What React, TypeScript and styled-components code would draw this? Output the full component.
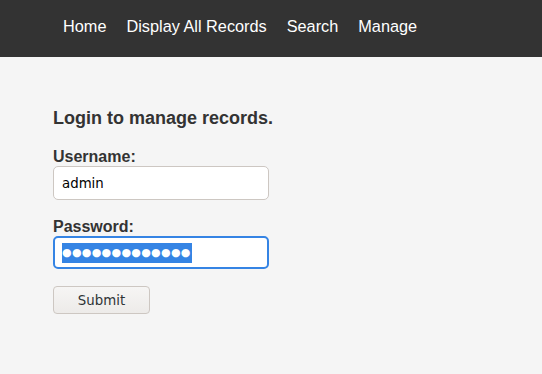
import React from "react";
import styled, { createGlobalStyle } from "styled-components";

const GlobalStyle = createGlobalStyle`
  html, body {
    margin: 0;
    padding: 0;
    background: #f5f5f5;
    font-family: "Liberation Sans", Arial, sans-serif;
  }
`;

const Header = styled.header`
  height: 57px;
  background: #333333;
  display: flex;
  align-items: center;
  padding-left: 53px;
`;

const Nav = styled.nav`
  display: flex;
  align-items: center;
  gap: 20px;
  padding-left: 10px;
  margin-top: -5px;
`;

const NavLink = styled.a`
  color: #ffffff;
  font-size: 16.3px;
  text-decoration: none;
  cursor: pointer;
`;

const Main = styled.main`
  padding: 51px 53px 40px;
`;

const Title = styled.h2`
  margin: 0 0 20px;
  font-size: 18px;
  font-weight: bold;
  color: #333333;
  line-height: 20px;
`;

const Field = styled.div<{ $space?: number }>`
  display: flex;
  flex-direction: column;
  align-items: flex-start;
  margin-bottom: ${(p) => p.$space ?? 18}px;
`;

const Label = styled.label`
  font-size: 16px;
  font-weight: bold;
  color: #333333;
  line-height: 18px;
`;

const Input = styled.div<{ $focused?: boolean }>`
  box-sizing: border-box;
  width: 216px;
  height: ${(p) => (p.$focused ? "33px" : "34px")};
  background: #ffffff;
  border: ${(p) => (p.$focused ? "2px solid #3584e4" : "1px solid #cdc7c2")};
  border-radius: 5px;
  display: flex;
  align-items: center;
  padding-left: ${(p) => (p.$focused ? "7px" : "8px")};
  font-family: "DejaVu Sans", sans-serif;
  font-size: 13.33px;
  color: #000000;
`;

const Selection = styled.span`
  background: #3584e4;
  color: #ffffff;
  font-size: 11px;
  letter-spacing: 0.3px;
  line-height: 20px;
  height: 20px;
  display: inline-block;
  padding-right: 1px;
`;

const Button = styled.button`
  box-sizing: border-box;
  width: 97px;
  height: 28px;
  border: 1px solid #cdc7c2;
  border-radius: 4px;
  background: linear-gradient(#f6f5f4, #edebe9);
  font-family: "DejaVu Sans", sans-serif;
  font-size: 13.33px;
  color: #2e3436;
  padding: 0;
`;

export default function App() {
  return (
    <>
      <GlobalStyle />
      <Header>
        <Nav>
          <NavLink>Home</NavLink>
          <NavLink>Display All Records</NavLink>
          <NavLink>Search</NavLink>
          <NavLink>Manage</NavLink>
        </Nav>
      </Header>
      <Main>
        <Title>Login to manage records.</Title>
        <Field>
          <Label>Username:</Label>
          <Input>admin</Input>
        </Field>
        <Field $space={17}>
          <Label>Password:</Label>
          <Input $focused>
            <Selection>●●●●●●●●●●●●●</Selection>
          </Input>
        </Field>
        <Button>Submit</Button>
      </Main>
    </>
  );
}
